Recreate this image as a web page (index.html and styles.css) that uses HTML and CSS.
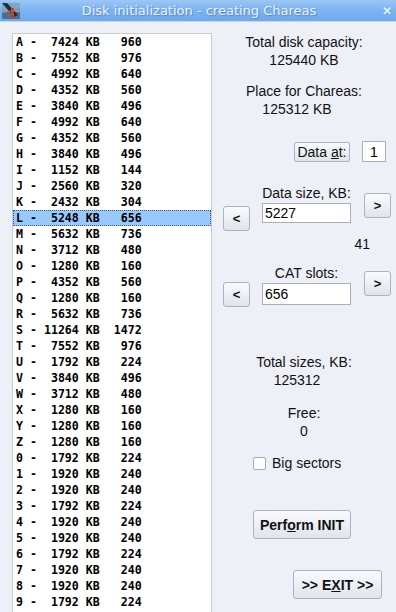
FILE: index.html
```html
<!DOCTYPE html>
<html>
<head>
    <title>Disk initialization - creating Chareas</title>
    <link rel="stylesheet" href="styles.css">
</head>
<body>
    <div class="window">
        <div class="titlebar">
            <svg class="app-icon" width="18" height="16" viewBox="0 0 18 16">
                <rect width="18" height="16" fill="#7fa6c8"/>
                <rect y="9" width="18" height="7" fill="#4d6f8c"/>
                <path d="M0 0 L5 0 L16 12 L12 14 Z" fill="#2a2a33"/>
                <path d="M9 5 L12 5 L12 16 L9 16 Z" fill="#b8452e"/>
                <path d="M0 10 L18 6" stroke="#c86a3a" stroke-width="1"/>
            </svg>
            <span class="title">Disk initialization - creating Chareas</span>
            <span class="close">&#x2715;</span>
        </div>

        <div class="content">
            <div class="listbox" id="partList"></div>

            <div class="panel">
                <div class="info">
                    <div>Total disk capacity:</div>
                    <div>125440 KB</div>
                </div>
                <div class="info second">
                    <div>Place for Chareas:</div>
                    <div class="shift">125312 KB</div>
                </div>

                <div class="data-at">
                    <button class="btn small">Data <u>a</u>t:</button>
                    <input class="field tiny" type="text" value="1">
                </div>

                <div class="spin">
                    <div class="spin-label">Data size, KB:</div>
                    <button class="btn arrow left">&lt;</button>
                    <input class="field" type="text" value="5227">
                    <button class="btn arrow right">&gt;</button>
                </div>
                <div class="count">41</div>

                <div class="spin cat">
                    <div class="spin-label">CAT slots:</div>
                    <button class="btn arrow left">&lt;</button>
                    <input class="field" type="text" value="656">
                    <button class="btn arrow right">&gt;</button>
                </div>

                <div class="info totals">
                    <div>Total sizes, KB:</div>
                    <div class="shift2">125312</div>
                </div>
                <div class="info free">
                    <div>Free:</div>
                    <div>0</div>
                </div>

                <label class="check">
                    <span class="box"></span>
                    <span>Bi<u>g</u> sectors</span>
                </label>

                <button class="btn big init">Perf<u>o</u>rm INIT</button>
                <button class="btn big exit">&gt;&gt; E<u>X</u>IT &gt;&gt;</button>
            </div>
        </div>
    </div>

    <script>
        const parts = [
            ['A', 7424, 960], ['B', 7552, 976], ['C', 4992, 640], ['D', 4352, 560],
            ['E', 3840, 496], ['F', 4992, 640], ['G', 4352, 560], ['H', 3840, 496],
            ['I', 1152, 144], ['J', 2560, 320], ['K', 2432, 304], ['L', 5248, 656],
            ['M', 5632, 736], ['N', 3712, 480], ['O', 1280, 160], ['P', 4352, 560],
            ['Q', 1280, 160], ['R', 5632, 736], ['S', 11264, 1472], ['T', 7552, 976],
            ['U', 1792, 224], ['V', 3840, 496], ['W', 3712, 480], ['X', 1280, 160],
            ['Y', 1280, 160], ['Z', 1280, 160], ['0', 1792, 224], ['1', 1920, 240],
            ['2', 1920, 240], ['3', 1792, 224], ['4', 1920, 240], ['5', 1920, 240],
            ['6', 1792, 224], ['7', 1920, 240], ['8', 1920, 240], ['9', 1792, 224]
        ];

        const list = document.getElementById('partList');
        parts.forEach(p => {
            const row = document.createElement('div');
            row.className = 'row';
            if (p[0] === 'L') row.className += ' selected';
            row.textContent = p[0] + ' - ' + String(p[1]).padStart(5) + ' KB' + String(p[2]).padStart(6);
            list.appendChild(row);
        });
    </script>
</body>
</html>
```

FILE: styles.css
```css
body {
    margin: 0;
    padding: 0;
    font-family: "Liberation Sans", Arial, sans-serif;
    background-color: #eef0f8;
    overflow: hidden;
}

.window {
    width: 396px;
    height: 612px;
    display: flex;
    flex-direction: column;
    background-color: #eef0f8;
}

.titlebar {
    height: 21px;
    display: flex;
    align-items: center;
    background: linear-gradient(#9cc6f6, #7db5f1 45%, #6ca9ee);
    border-bottom: 1px solid #c8d4e8;
}

.app-icon {
    margin-left: 2px;
    margin-top: 1px;
}

.title {
    flex: 1;
    text-align: center;
    font-family: "DejaVu Sans", sans-serif;
    font-size: 13px;
    color: #eaf2ff;
    text-shadow: 1px 1px 1px #5a86c0;
    margin-right: 4px;
}

.close {
    color: #fff;
    font-family: "DejaVu Sans", sans-serif;
    font-size: 12px;
    font-weight: bold;
    margin-right: 4px;
}

.content {
    flex: 1;
    display: flex;
    padding-top: 11px;
}

.listbox {
    margin-left: 12px;
    width: 198px;
    background-color: #fff;
    border: 1px solid #c6ccd8;
    border-bottom: none;
}

.row {
    height: 16px;
    line-height: 16px;
    padding-left: 3px;
    white-space: pre;
    font-family: "DejaVu Sans Mono", monospace;
    font-weight: bold;
    font-size: 11.6px;
    color: #000;
}

.row.selected {
    background-color: #98c8fc;
    outline: 1px dotted #3a5a80;
    outline-offset: -1px;
}

.panel {
    flex: 1;
    display: flex;
    flex-direction: column;
    font-size: 14px;
    color: #111;
}

.info {
    text-align: center;
    line-height: 18px;
}

.second {
    margin-top: 13px;
}

.shift {
    margin-right: 14px;
}

.data-at {
    display: flex;
    justify-content: flex-end;
    align-items: center;
    gap: 12px;
    margin-top: 23px;
    padding-right: 10px;
}

.btn {
    font-family: "Liberation Sans", Arial, sans-serif;
    font-size: 14px;
    color: #111;
    background: linear-gradient(#fafbfd, #dfe4ec);
    border: 1px solid #aab3c2;
    border-radius: 3px;
    padding: 0;
    cursor: pointer;
}

.btn.small {
    width: 56px;
    height: 20px;
    border-radius: 2px;
}

.field {
    font-family: "Liberation Sans", Arial, sans-serif;
    font-size: 14px;
    color: #000;
    background-color: #fff;
    border: 1px solid #a8b0bc;
    box-sizing: border-box;
    padding: 0 2px;
    height: 20px;
    width: 89px;
}

.field.tiny {
    width: 24px;
    height: 21px;
    text-align: center;
}

.spin {
    display: grid;
    grid-template-columns: 27px 89px 27px;
    grid-template-rows: 19px 25px;
    column-gap: 12px;
    margin-top: 22px;
    margin-left: 11px;
}

.spin-label {
    grid-column: 2;
    grid-row: 1;
    text-align: center;
    line-height: 18px;
}

.spin .field {
    grid-column: 2;
    grid-row: 2;
}

.arrow {
    width: 27px;
    height: 25px;
    font-weight: bold;
    font-size: 13px;
}

.arrow.left {
    grid-column: 1;
    grid-row: 2 / span 2;
    margin-top: 3px;
}

.arrow.right {
    grid-column: 3;
    grid-row: 1 / span 2;
    margin-left: 1px;
    margin-top: 9px;
    align-self: start;
}

.count {
    text-align: right;
    padding-right: 26px;
    margin-top: 4px;
    line-height: 18px;
}

.spin.cat {
    margin-top: 11px;
    grid-template-rows: 19px 24px;
}

.spin.cat .field {
    height: 22px;
}

.spin.cat .arrow.left {
    margin-top: -1px;
}

.spin.cat .arrow.right {
    margin-top: 7px;
}

.totals {
    margin-top: 46px;
}

.shift2 {
    margin-right: 14px;
}

.free {
    margin-top: 15px;
}

.check {
    display: flex;
    align-items: center;
    gap: 6px;
    margin-top: 14px;
    margin-left: 41px;
    line-height: 18px;
}

.box {
    width: 11px;
    height: 11px;
    background-color: #fff;
    border: 1px solid #a4acb8;
    border-radius: 2px;
}

.btn.big {
    font-weight: bold;
    height: 29px;
    align-self: flex-start;
}

.init {
    width: 98px;
    margin-top: 38px;
    margin-left: 41px;
}

.exit {
    width: 89px;
    margin-top: 31px;
    margin-left: 81px;
}
```
